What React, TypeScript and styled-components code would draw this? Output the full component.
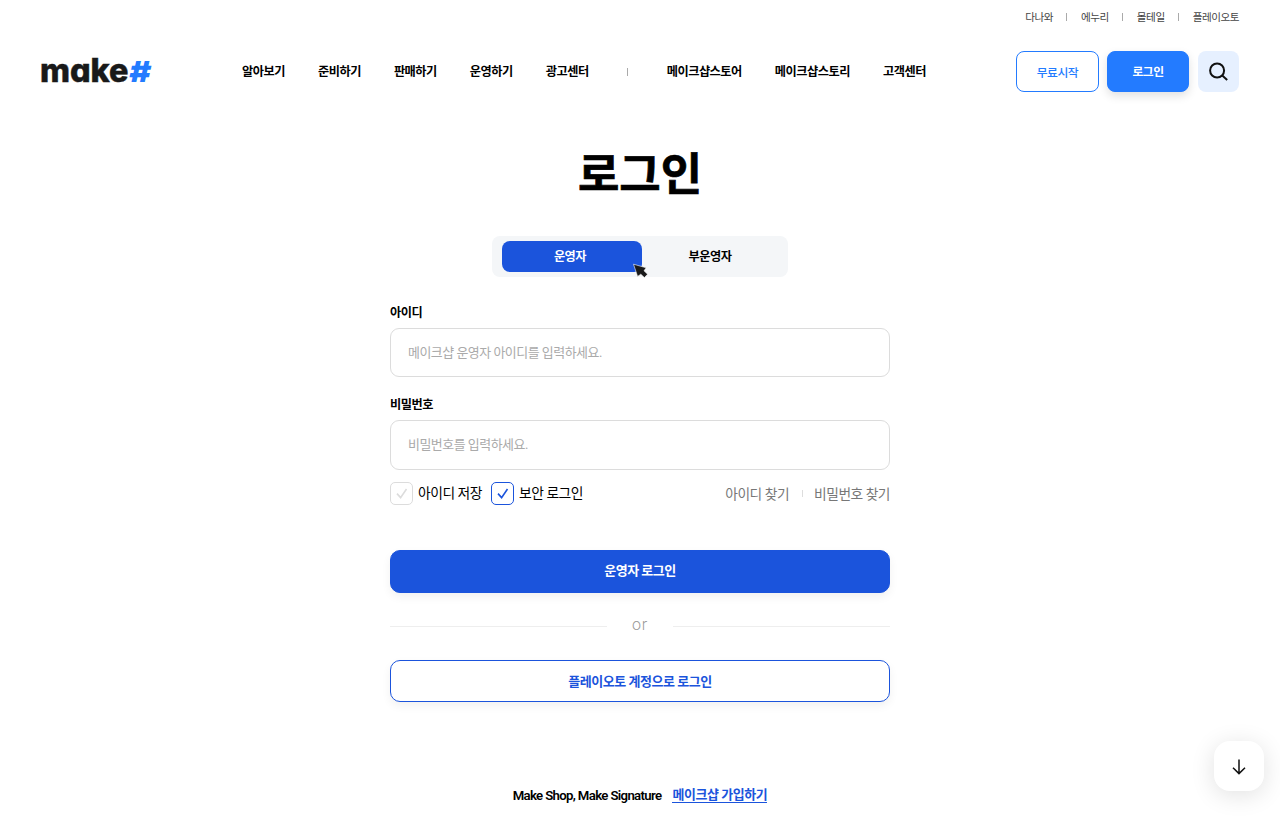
import React, {useState} from "react";
import styled, {createGlobalStyle, css} from "styled-components";

const GlobalStyle = createGlobalStyle`
    * {
        box-sizing: border-box;
    }

    body {
        margin: 0;
        overflow: hidden;
        background: #fff;
        color: #000;
        font-family: Roboto, "Noto Sans CJK KR", sans-serif;
        letter-spacing: -0.03em;
    }

    a {
        color: inherit;
        text-decoration: none;
    }

    button, input {
        font-family: inherit;
        letter-spacing: inherit;
    }

    button {
        padding: 0;
        cursor: pointer;
    }
`;

const Page = styled.div`
    width: 1280px;
    height: 832px;
    overflow: hidden;
`;

const FamilyLinks = styled.div`
    display: flex;
    justify-content: flex-end;
    align-items: center;
    height: 34px;
    padding-right: 41px;
    font-size: 10.6px;
    line-height: 16px;
    color: #444;

    a {
        padding-top: 2px;
    }
`;

const Divider = styled.i<{ $margin: string; $height?: number; $color?: string }>`
    width: 1px;
    height: ${(props) => props.$height ?? 8}px;
    margin: ${(props) => props.$margin};
    background: ${(props) => props.$color ?? "#aaa"};
`;

const Header = styled.header`
    display: flex;
    align-items: center;
    height: 75px;
    padding: 0 41px 0 40px;
`;

const LogoLink = styled.a`
    width: 202px;
    height: 30px;
`;

const Nav = styled.nav`
    display: flex;
    align-items: center;
    flex: 1;
    font-size: 12.2px;
    font-weight: 600;
    line-height: 18px;
`;

const NavGroup = styled.div`
    display: flex;
    gap: 33px;
`;

const HeaderActions = styled.div`
    display: flex;
    gap: 8px;
`;

const HeaderButton = styled.button<{ $filled?: boolean }>`
    width: ${(props) => (props.$filled ? 82 : 83)}px;
    height: 41px;
    border: 1px solid #237bff;
    border-radius: 8px;
    font-size: 11.8px;
    font-weight: 500;
    color: #237bff;
    background: #fff;
    ${(props) => props.$filled && css`
        padding-bottom: 2px;
        color: #fff;
        font-weight: 600;
        background: #237bff;
        box-shadow: 0 4px 10px rgba(0, 0, 0, 0.12);
    `}
`;

const SearchButton = styled.button`
    display: flex;
    align-items: center;
    justify-content: center;
    width: 41px;
    height: 41px;
    margin-left: 1px;
    border: 0;
    border-radius: 8px;
    background: #e6f0ff;
`;

const Main = styled.main`
    width: 500px;
    margin: 0 auto;
`;

const Title = styled.h1`
    margin: 27px 0 0;
    height: 76px;
    font-size: 45px;
    line-height: 79px;
    font-weight: 700;
    letter-spacing: 0;
    text-align: center;
    -webkit-text-stroke: 0.7px #000;
`;

const Tabs = styled.div`
    position: relative;
    display: flex;
    width: 296px;
    height: 41px;
    margin: 24px auto 0;
    padding: 5px 6px 5px 10px;
    border-radius: 8px;
    background: #f4f6f8;
`;

const Tab = styled.button<{ $active: boolean }>`
    width: 140px;
    height: 31px;
    padding: 0 4px 1px 0;
    border: 0;
    border-radius: 8px;
    font-size: 12.2px;
    font-weight: ${(props) => (props.$active ? 700 : 600)};
    color: ${(props) => (props.$active ? "#fff" : "#000")};
    background: ${(props) => (props.$active ? "#1b54dc" : "transparent")};
`;

const Pointer = styled.svg`
    position: absolute;
    left: 140px;
    top: 27px;
`;

const Field = styled.label<{ $top: number }>`
    display: block;
    margin-top: ${(props) => props.$top}px;
    font-size: 12.2px;
    font-weight: 600;
    line-height: 18px;
`;

const Input = styled.input<{ $height: number }>`
    display: block;
    width: 100%;
    height: ${(props) => props.$height}px;
    margin-top: 6px;
    padding: 0 17px 1px;
    border: 1px solid #dcdcdc;
    border-radius: 9px;
    outline: 0;
    font-size: 12.95px;

    &::placeholder {
        color: #aaa;
        opacity: 1;
    }
`;

const Options = styled.div`
    display: flex;
    align-items: center;
    height: 23px;
    margin: 12px 0 45px;
    font-size: 13.8px;
`;

const Check = styled.button<{ $checked: boolean }>`
    display: flex;
    align-items: center;
    gap: 5px;
    height: 23px;
    margin-right: 9px;
    border: 0;
    background: none;
    font-size: 13.8px;
    line-height: 21px;
    color: #000;

    span {
        display: flex;
        align-items: center;
        justify-content: center;
        width: 23px;
        height: 23px;
        border: 1px solid ${(props) => (props.$checked ? "#1b54dc" : "#dcdcdc")};
        border-radius: 5px;
        color: ${(props) => (props.$checked ? "#1b54dc" : "#dcdcdc")};
    }
`;

const FindLinks = styled.div`
    display: flex;
    align-items: center;
    margin-left: auto;
    font-size: 13.75px;
    color: #777;

    a {
        padding-bottom: 2px;
    }
`;

const SubmitButton = styled.button<{ $outline?: boolean }>`
    display: block;
    width: 100%;
    height: ${(props) => (props.$outline ? 42 : 43)}px;
    padding-bottom: ${(props) => (props.$outline ? 2 : 4)}px;
    border: 1px solid #1b54dc;
    border-radius: 10px;
    font-size: 13px;
    font-weight: ${(props) => (props.$outline ? 600 : 700)};
    color: ${(props) => (props.$outline ? "#1b54dc" : "#fff")};
    background: ${(props) => (props.$outline ? "#fff" : "#1b54dc")};
    box-shadow: 0 4px 10px rgba(0, 0, 0, 0.06);
`;

const Or = styled.div`
    display: flex;
    align-items: center;
    height: 67px;
    color: #999;
    font-size: 16px;
    font-weight: 300;
    letter-spacing: 0.05em;

    &::before, &::after {
        content: "";
        width: 217px;
        height: 1px;
        background: #eee;
    }

    span {
        flex: 1;
        padding-bottom: 4px;
        text-align: center;
    }
`;

const Join = styled.p`
    display: flex;
    justify-content: center;
    align-items: center;
    gap: 11px;
    margin: 84px 0 0;
    font-size: 13.2px;
    line-height: 20px;
    font-weight: 600;
    letter-spacing: -0.05em;

    a {
        height: 17px;
        margin-bottom: 3px;
        font-size: 12.95px;
        line-height: 18px;
        letter-spacing: -0.03em;
        border-bottom: 1px solid #1b54dc;
        color: #1b54dc;
    }
`;

const ScrollButton = styled.button`
    position: fixed;
    right: 16px;
    bottom: 41px;
    display: flex;
    align-items: center;
    justify-content: center;
    width: 50px;
    height: 50px;
    padding-top: 2px;
    border: 0;
    border-radius: 16px;
    background: #fff;
    box-shadow: 0 4px 24px rgba(0, 0, 0, 0.12);
`;

const family = ["다나와", "에누리", "몰테일", "플레이오토"];
const menus = ["알아보기", "준비하기", "판매하기", "운영하기", "광고센터"];
const subMenus = ["메이크샵스토어", "메이크샵스토리", "고객센터"];
const tabs = ["운영자", "부운영자"];

function Logo() {
    return (
        <svg width="120" height="30" viewBox="0 0 120 30" overflow="visible">
            <text
                x="0"
                y="24.5"
                fontFamily="Inter, sans-serif"
                fontSize="32"
                fontWeight="800"
                letterSpacing="0"
                fill="#191919"
                stroke="#191919"
                strokeWidth=".5"
                textLength="88.5"
                lengthAdjust="spacingAndGlyphs"
                style={{fontFeatureSettings: '"cv11", "ss03"'}}
            >
                make
            </text>
            <text
                transform="translate(89 24.5) skewX(-2)"
                fontFamily="Inter, sans-serif"
                fontSize="29"
                fontWeight="900"
                letterSpacing="0"
                fill="#237bff"
                textLength="22"
                lengthAdjust="spacingAndGlyphs"
            >
                #
            </text>
        </svg>
    );
}

interface CheckOptionProps {
    label: string;
    initial: boolean;
}

function CheckOption({label, initial}: CheckOptionProps) {
    const [checked, setChecked] = useState(initial);
    return (
        <Check type="button" $checked={checked} onClick={() => setChecked(!checked)}>
            <span>
                <svg width="12" height="12" viewBox="0 0 12 12" fill="none" stroke="currentColor" strokeWidth="1.6">
                    <path d="M1 5.6 4.6 9.6 10.5 1"/>
                </svg>
            </span>
            {label}
        </Check>
    );
}

function App() {
    const [tab, setTab] = useState(tabs[0]);
    return (
        <Page>
            <GlobalStyle/>
            <FamilyLinks>
                {family.map((name, i) => (
                    <React.Fragment key={name}>
                        {i > 0 && <Divider $margin="0 14px 0 13px"/>}
                        <a href="#">{name}</a>
                    </React.Fragment>
                ))}
            </FamilyLinks>
            <Header>
                <LogoLink href="#"><Logo/></LogoLink>
                <Nav>
                    <NavGroup>
                        {menus.map((name) => <a href="#" key={name}>{name}</a>)}
                    </NavGroup>
                    <Divider $margin="0 39px 0 38px"/>
                    <NavGroup>
                        {subMenus.map((name) => <a href="#" key={name}>{name}</a>)}
                    </NavGroup>
                </Nav>
                <HeaderActions>
                    <HeaderButton>무료시작</HeaderButton>
                    <HeaderButton $filled>로그인</HeaderButton>
                    <SearchButton aria-label="검색">
                        <svg width="20" height="20" viewBox="0 0 20 20" fill="none" stroke="#111" strokeWidth="2">
                            <circle cx="8.1" cy="8.5" r="7"/>
                            <path d="m13 13.3 5.2 4.8"/>
                        </svg>
                    </SearchButton>
                </HeaderActions>
            </Header>
            <Main>
                <Title>로그인</Title>
                <Tabs>
                    {tabs.map((name) => (
                        <Tab key={name} $active={tab === name} onClick={() => setTab(name)}>{name}</Tab>
                    ))}
                    <Pointer width="17" height="16" viewBox="0 0 17 16">
                        <path
                            d="M1.5 1.2 14.2 4.8 12 7.8 15.6 11.2 12.4 14.6 8.8 11.2 5.6 13.4Z"
                            fill="#191919"
                            stroke="#fff"
                            strokeWidth=".6"
                        />
                    </Pointer>
                </Tabs>
                <Field $top={27}>
                    아이디
                    <Input $height={49} placeholder="메이크샵 운영자 아이디를 입력하세요."/>
                </Field>
                <Field $top={19}>
                    비밀번호
                    <Input $height={50} type="password" placeholder="비밀번호를 입력하세요."/>
                </Field>
                <Options>
                    <CheckOption label="아이디 저장" initial={false}/>
                    <CheckOption label="보안 로그인" initial={true}/>
                    <FindLinks>
                        <a href="#">아이디 찾기</a>
                        <Divider $margin="0 11px 0 13px" $height={7} $color="#ddd"/>
                        <a href="#">비밀번호 찾기</a>
                    </FindLinks>
                </Options>
                <SubmitButton>운영자 로그인</SubmitButton>
                <Or><span>or</span></Or>
                <SubmitButton $outline>플레이오토 계정으로 로그인</SubmitButton>
                <Join>
                    Make Shop, Make Signature
                    <a href="#">메이크샵 가입하기</a>
                </Join>
            </Main>
            <ScrollButton aria-label="아래로">
                <svg width="14" height="16" viewBox="0 0 14 16" fill="none" stroke="#111" strokeWidth="1.5">
                    <path d="M7 .5v14M1 8.8l6 5.8 6-5.8"/>
                </svg>
            </ScrollButton>
        </Page>
    );
}

export default App;
